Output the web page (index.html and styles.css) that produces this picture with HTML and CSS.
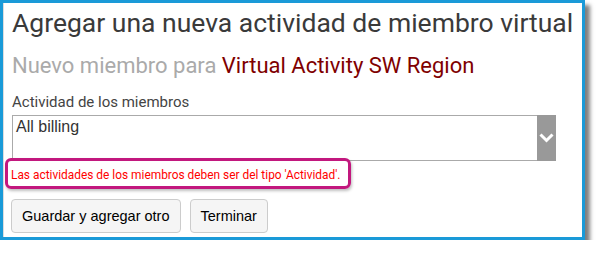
FILE: index.html
```html
<!DOCTYPE html>
<html lang="es">
  <head>
    <meta charset="UTF-8" />
    <meta name="viewport" content="width=device-width, initial-scale=1.0" />
    <title>Agregar una nueva actividad de miembro virtual</title>
    <link rel="stylesheet" href="styles.css">
  </head>
  <body>
    <div class="frame">
      <h1>Agregar una nueva actividad de miembro virtual</h1>
      <h2>
        <span class="muted">Nuevo miembro para</span>
        <span class="group">Virtual Activity SW Region</span>
      </h2>
      <label class="field-label">Actividad de los miembros</label>
      <div class="select">
        <div class="select-value">All billing</div>
        <div class="select-arrow">
          <svg width="15" height="10" viewBox="0 0 15 10">
            <path d="M1.5 1.5 L7.5 7.5 L13.5 1.5" fill="none" stroke="#fff" stroke-width="3" />
          </svg>
        </div>
      </div>
      <div class="error">Las actividades de los miembros deben ser del tipo 'Actividad'.</div>
      <div class="actions">
        <button>Guardar y agregar otro</button>
        <button>Terminar</button>
      </div>
    </div>
  </body>
</html>
```

FILE: styles.css
```css
body {
  margin: 0;
  background-color: #ffffff;
  font-family: Roboto, "Liberation Sans", sans-serif;
}

.frame {
  box-sizing: border-box;
  width: 585px;
  height: 240px;
  border: 3px solid #1a9ad8; /* marco azul */
  padding: 3px 9px 0 9px;
  background-color: #ffffff;
  box-shadow: inset 1px 0 #dddddd, 5px 5px 4px rgba(0, 0, 0, 0.5);
}

h1 {
  margin: 0;
  font-size: 26.5px;
  line-height: 34px;
  font-weight: normal;
  color: #3a3a3a;
  white-space: nowrap;
}

h2 {
  margin: 12px 0 0 0;
  font-size: 22px;
  line-height: 28px;
  font-weight: normal;
  white-space: nowrap;
}

.muted {
  color: #aaaaaa;
}

.group {
  color: #7f0000;
}

.field-label {
  display: block;
  margin-top: 13px;
  font-size: 15px;
  line-height: 18px;
  color: #444444;
}

.select {
  display: flex;
  box-sizing: border-box;
  width: 544px;
  height: 46px;
  margin-top: 4px;
  border-top: 1px solid #aaaaaa;
  border-left: 1px solid #aaaaaa;
  border-bottom: 1px solid #aaaaaa;
}

.select-value {
  flex-grow: 1;
  padding: 2px 0 0 3px;
  font-family: "Liberation Sans", Arial, sans-serif;
  font-size: 16px;
  line-height: 18px;
  color: #333333;
}

.select-arrow {
  width: 19px;
  margin-top: -1px;
  margin-bottom: -1px;
  background-color: #999999;
  display: flex;
  align-items: center;
  justify-content: center;
}

.error {
  width: 337px;
  margin: -3px 0 0 -7px;
  padding: 6px 0 3px 3px;
  border: 3px solid #c2187e;
  border-radius: 6px;
  box-shadow: 1px 2px 3px rgba(0, 0, 0, 0.25);
  font-size: 11.9px;
  line-height: 16px;
  color: #ff0000;
  white-space: nowrap;
}

.actions {
  display: flex;
  gap: 9px;
  margin: 10px 0 0 -1px;
}

button {
  height: 34px;
  padding: 0 10px;
  background-color: #f5f5f5;
  border: 1px solid #cccccc;
  border-radius: 4px;
  font-family: "Liberation Sans", Arial, sans-serif;
  font-size: 14.5px;
  color: #000000;
}
```
